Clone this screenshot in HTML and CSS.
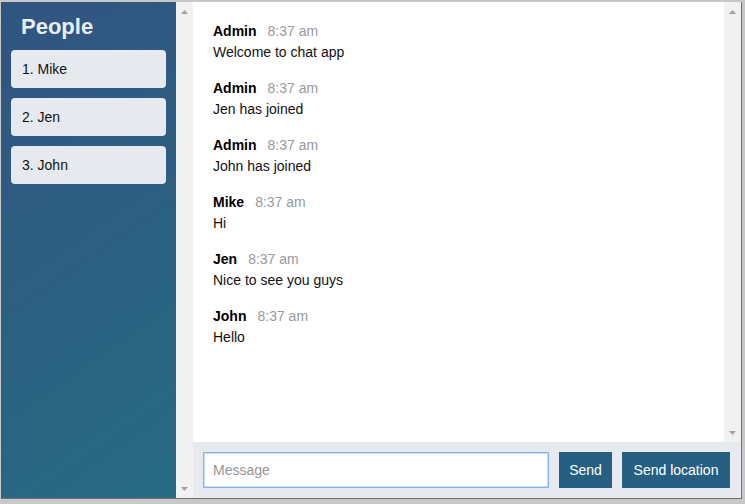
FILE: index.html
```html
<!DOCTYPE html>
<html>
<head>
<meta charset="utf-8">
<title>Chat</title>
<link rel="stylesheet" href="styles.css">
</head>
<body>
<div class="window">
  <div class="side">
    <aside class="sidebar">
      <h2 class="room-title">People</h2>
      <ul class="users">
        <li class="user">1. Mike</li>
        <li class="user">2. Jen</li>
        <li class="user">3. John</li>
      </ul>
    </aside>
    <div class="scrollbar">
      <span class="arrow"><svg width="7" height="4" viewBox="0 0 7 4"><polygon points="0,4 7,4 3.5,0" fill="#a3a3a3"/></svg></span>
      <span class="arrow arrow-down"><svg width="7" height="4" viewBox="0 0 7 4"><polygon points="0,0 7,0 3.5,4" fill="#a3a3a3"/></svg></span>
    </div>
  </div>
  <main class="main">
    <div class="messages-wrap">
      <div class="messages">
        <div class="message">
          <p class="meta"><span class="name">Admin</span><span class="time">8:37 am</span></p>
          <p class="text">Welcome to chat app</p>
        </div>
        <div class="message">
          <p class="meta"><span class="name">Admin</span><span class="time">8:37 am</span></p>
          <p class="text">Jen has joined</p>
        </div>
        <div class="message">
          <p class="meta"><span class="name">Admin</span><span class="time">8:37 am</span></p>
          <p class="text">John has joined</p>
        </div>
        <div class="message">
          <p class="meta"><span class="name">Mike</span><span class="time">8:37 am</span></p>
          <p class="text">Hi</p>
        </div>
        <div class="message">
          <p class="meta"><span class="name">Jen</span><span class="time">8:37 am</span></p>
          <p class="text">Nice to see you guys</p>
        </div>
        <div class="message">
          <p class="meta"><span class="name">John</span><span class="time">8:37 am</span></p>
          <p class="text">Hello</p>
        </div>
      </div>
      <div class="scrollbar">
        <span class="arrow"><svg width="7" height="4" viewBox="0 0 7 4"><polygon points="0,4 7,4 3.5,0" fill="#a3a3a3"/></svg></span>
        <span class="arrow arrow-down"><svg width="7" height="4" viewBox="0 0 7 4"><polygon points="0,0 7,0 3.5,4" fill="#a3a3a3"/></svg></span>
      </div>
    </div>
    <form class="footer">
      <input class="msg-input" type="text" placeholder="Message">
      <button class="btn btn-send" type="button">Send</button>
      <button class="btn btn-loc" type="button">Send location</button>
    </form>
  </main>
</div>
</body>
</html>
```
FILE: styles.css
```css
* { box-sizing: border-box; }
html, body { margin: 0; padding: 0; }
body {
  background: #c8c8c8;
  font-family: "Liberation Sans", Arial, sans-serif;
  font-size: 14px;
  width: 745px;
  height: 504px;
  overflow: hidden;
}
.window {
  margin: 2px 0 0 1px;
  width: 741px;
  height: 497px;
  display: flex;
  background: #fff;
  border-right: 1px solid #707070;
  border-bottom: 1px solid #707070;
}
.side {
  display: flex;
  width: 192px;
  flex-shrink: 0;
}
.sidebar {
  width: 175px;
  padding: 12px 10px 0;
  background: linear-gradient(325deg, #276b82 0%, #315481 100%);
  color: #e9eef3;
}
.room-title {
  margin: 0 0 11px 10px;
  font-size: 22px;
  font-weight: bold;
  line-height: 25px;
}
.users {
  list-style: none;
  margin: 0;
  padding: 0;
  display: flex;
  flex-direction: column;
  gap: 10px;
}
.user {
  height: 38px;
  line-height: 38px;
  padding: 0 11px;
  background: #e6eaee;
  color: #111;
  border-radius: 4px;
  font-size: 14px;
}
.scrollbar {
  width: 17px;
  flex-shrink: 0;
  background: #f1f1f1;
  display: flex;
  flex-direction: column;
  justify-content: space-between;
}
.arrow {
  width: 17px;
  height: 19px;
  display: flex;
  align-items: center;
  justify-content: center;
}
.arrow svg { display: block; }
.main {
  flex: 1;
  display: flex;
  flex-direction: column;
  min-width: 0;
}
.messages-wrap {
  flex: 1;
  display: flex;
  min-height: 0;
}
.messages {
  flex: 1;
  padding: 21px 20px 0;
}
.message { margin-bottom: 20px; }
.meta, .text {
  margin: 0;
  line-height: 16px;
  font-size: 14px;
}
.name { font-weight: bold; color: #000; }
.time { color: #999; margin-left: 11px; }
.text { margin-top: 5px; color: #111; }
.footer {
  flex-shrink: 0;
  height: 56px;
  margin: 0;
  padding: 10px 11px 10px 10px;
  background: #e6eaee;
  display: flex;
  gap: 10px;
}
.msg-input {
  flex: 1;
  min-width: 0;
  height: 36px;
  margin: 0;
  padding: 0 9px;
  border: 1px solid #8db0ec;
  box-shadow: inset 0 0 0 1px #c9dbf8;
  outline: none;
  background: #fff;
  font-family: "Liberation Sans", Arial, sans-serif;
  font-size: 14px;
  color: #111;
}
.msg-input::placeholder { color: #959595; }
.btn {
  height: 36px;
  margin: 0;
  padding: 0;
  border: none;
  background: #265f82;
  color: #fff;
  font-family: "Liberation Sans", Arial, sans-serif;
  font-size: 14px;
}
.btn-send { width: 53px; }
.btn-loc { width: 108px; }
```
